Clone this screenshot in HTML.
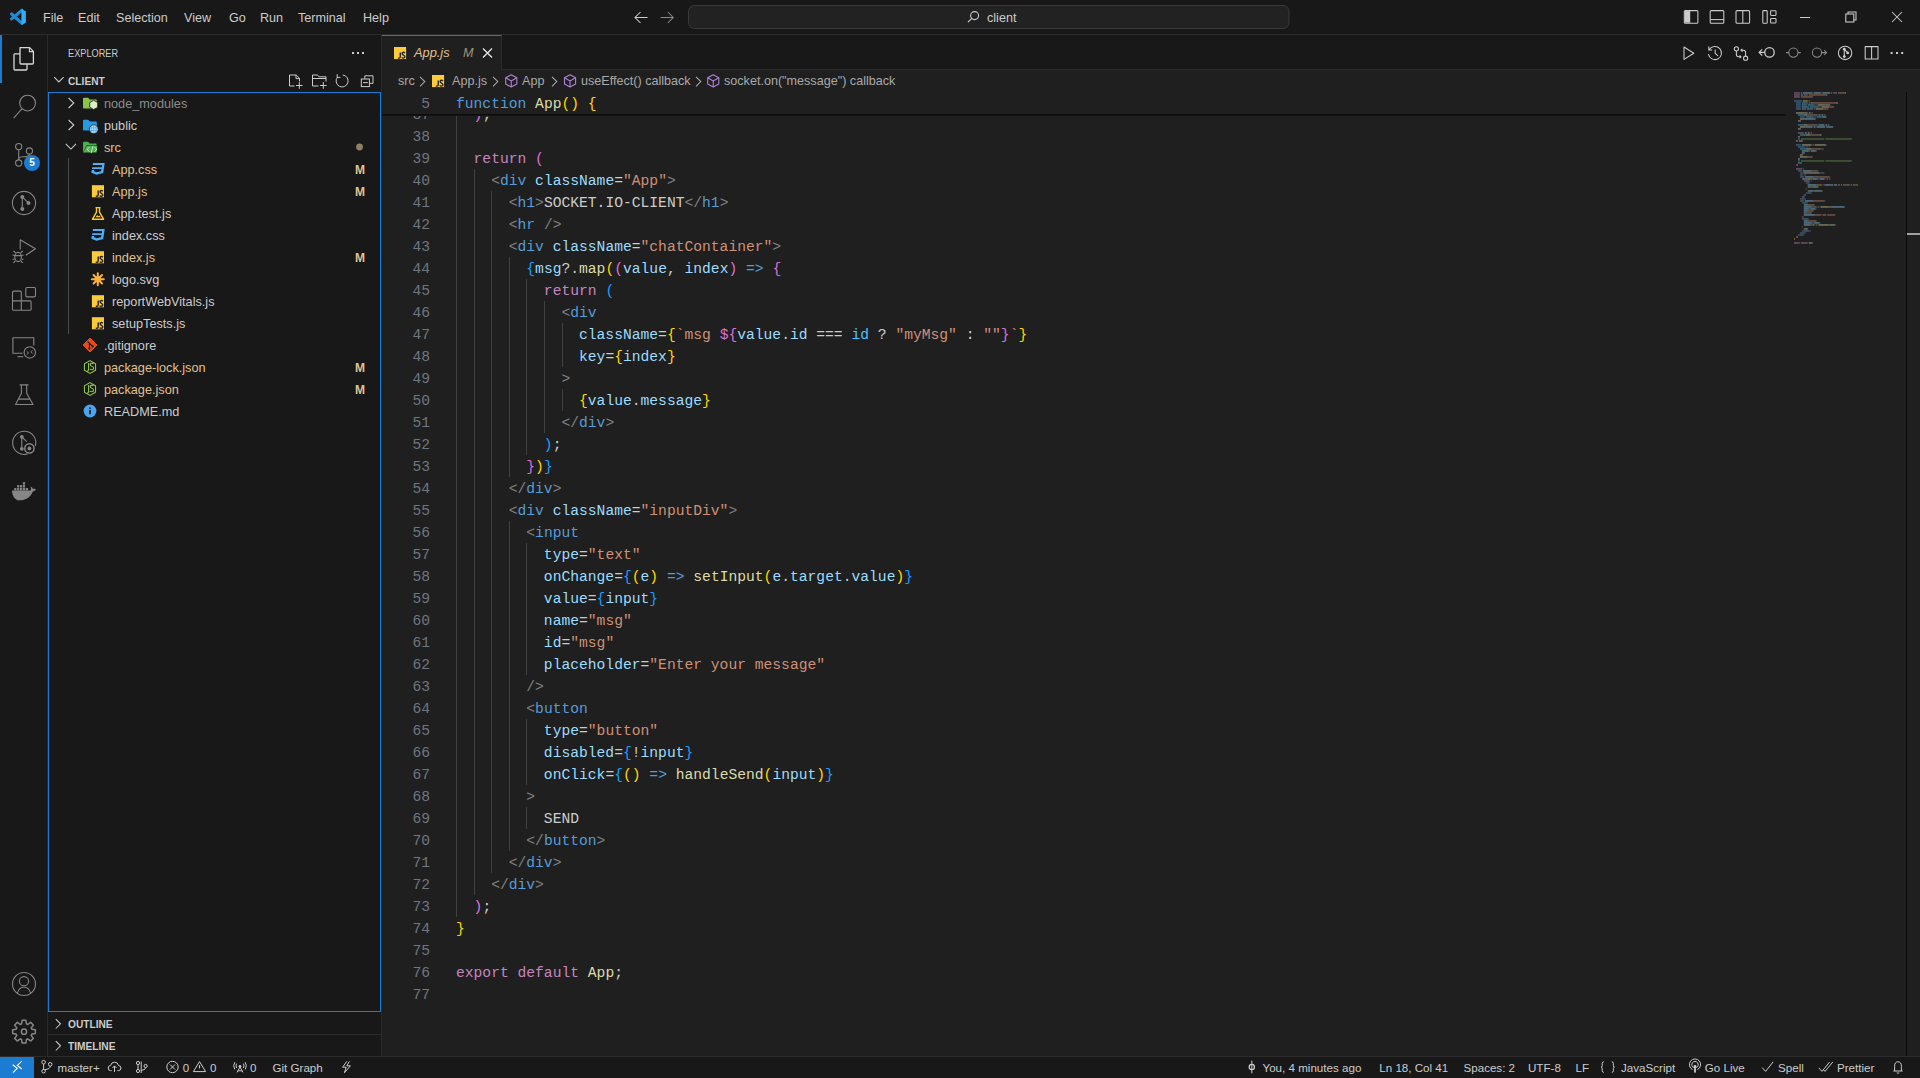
<!DOCTYPE html>
<html><head><meta charset="utf-8">
<style>
*{box-sizing:border-box}
html,body{margin:0;padding:0}
body{width:1920px;height:1078px;background:#181818;position:relative;overflow:hidden;font-family:"Liberation Sans",sans-serif;color:#CCCCCC;font-size:13px}
.a{position:absolute}
.t{position:absolute;white-space:nowrap;line-height:1}
svg{position:absolute;overflow:visible}
/* title bar */
#title{left:0;top:0;width:1920px;height:35px;background:#181818;border-bottom:1px solid #2B2B2B}
.menu{top:12px;font-size:12.6px;color:#CCCCCC}
/* activity */
#act{left:0;top:35px;width:48px;height:1021px;background:#181818;border-right:1px solid #2B2B2B}
/* sidebar */
#side{left:48px;top:35px;width:334px;height:1021px;background:#181818;border-right:1px solid #2B2B2B}
.row{position:absolute;height:22px;line-height:22px;white-space:nowrap;font-size:13px}
/* editor */
#editor{left:382px;top:35px;width:1538px;height:1021px;background:#1F1F1F;overflow:hidden}
.ln{position:absolute;left:0;width:48px;text-align:right;height:22px;line-height:22px;font-family:"Liberation Mono",monospace;font-size:14.65px;color:#6E7681}
.cl{position:absolute;left:74px;height:22px;line-height:22px;white-space:pre;font-family:"Liberation Mono",monospace;font-size:14.65px;color:#CCCCCC}
.ig{position:absolute;width:1px;height:22px;background:#404040}
#status{left:0;top:1056px;width:1920px;height:22px;background:#181818;border-top:1px solid #2B2B2B}
.sb{position:absolute;top:5px;font-size:12px;color:#CCCCCC;white-space:nowrap;line-height:1}
</style></head>
<body>
<!-- TITLE BAR -->
<div id="title" class="a">
  <svg style="left:0;top:0" width="40" height="35" viewBox="0 0 40 35">
    <path d="M22 10.2 L11.6 18.9 M11.6 14 L22 23.4" stroke="#1E8AD6" stroke-width="3.1" stroke-linecap="round"/>
    <path d="M21.4 9.3 L25.9 11.3 V22.7 L21.4 24.7 Z" fill="#38ABF2"/>
  </svg>
  <div class="t menu" style="left:43px">File</div>
  <div class="t menu" style="left:78px">Edit</div>
  <div class="t menu" style="left:116px">Selection</div>
  <div class="t menu" style="left:184px">View</div>
  <div class="t menu" style="left:229px">Go</div>
  <div class="t menu" style="left:260px">Run</div>
  <div class="t menu" style="left:298px">Terminal</div>
  <div class="t menu" style="left:363px">Help</div>
</div>

<!-- ACTIVITY BAR -->
<div id="act" class="a"></div>
<svg style="left:0;top:0" width="48" height="1078" viewBox="0 0 48 1078" fill="none" stroke="#868686" stroke-width="1.1" stroke-linejoin="round">
  <rect x="0" y="35" width="2" height="48" fill="#1B7CD2" stroke="none"/>
  <g stroke="#D7D7D7" stroke-width="1.3">
    <path d="M20 47.6 H29.6 L33.4 51.4 V63 Q33.4 64 32.4 64 H21 Q20 64 20 63 V48.6 Q20 47.6 21 47.6 Z"/>
    <path d="M29.4 47.8 V51.6 H33.2" stroke-width="1.1"/>
    <path d="M20 53.8 H15 Q14 53.8 14 54.8 V69 Q14 70 15 70 H26 Q27 70 27 69 V64.2"/>
  </g>
  <circle cx="27.6" cy="103.1" r="7.9"/><path d="M21.9 108.8 L13.6 118.2"/>
  <circle cx="18.7" cy="146.6" r="3.1"/><circle cx="29.4" cy="151" r="3.1"/><circle cx="18.7" cy="163" r="3.1"/>
  <path d="M18.7 149.7 V159.9 M18.7 158.5 Q19.5 156.8 23 156.8 H25 Q29.4 156.8 29.4 154.1"/>
  <circle cx="24" cy="203" r="11.6"/>
  <path d="M22.3 196.9 V208.9 M22.3 196.9 L28.5 203.1"/>
  <g fill="#868686" stroke="none"><circle cx="22.3" cy="196.9" r="2"/><circle cx="22.3" cy="208.9" r="2"/><circle cx="28.5" cy="203.1" r="2"/></g>
  <path d="M20.2 249.5 V239.8 L35.4 248.8 L25.8 255.2"/>
  <ellipse cx="18.1" cy="257" rx="3.3" ry="4.6"/>
  <path d="M14.8 255.3 H12.6 M14.8 259.2 H12.6 M21.4 255.3 H23.6 M21.4 259.2 H23.6 M15.6 252.8 L13.4 251 M20.6 252.8 L22.8 251 M15.3 261 L13.4 262.8 M20.9 261 L22.8 262.8 M14.8 255.6 H21.4"/>
  <rect x="25.8" y="287.5" width="9.7" height="9.4" rx="1.3"/>
  <path d="M13.8 291.1 H20.2 Q21.3 291.1 21.3 292.2 V300.9 H30 Q31.1 300.9 31.1 302 V309.2 Q31.1 310.3 30 310.3 H13.6 Q12.5 310.3 12.5 309.2 V292.4 Q12.5 291.1 13.8 291.1 Z M12.5 300.9 H21.3 M21.3 300.9 V310.3"/>
  <path d="M22.5 353.3 H12.9 V337.7 H33.8 V345.5"/><path d="M17.4 356.7 H23.2"/>
  <circle cx="29.8" cy="352.4" r="5.7"/>
  <path d="M26.8 351.4 L28.6 353 L26.8 354.6 M32.6 350.2 L30.8 351.8 L32.6 353.4" stroke-width="1"/>
  <path d="M19.6 384.9 H28.5 M21.4 384.9 V393.3 L15.6 404.5 H33 L26.7 393.3 V384.9 M18.4 399.1 H30.2"/>
  <path d="M27.5 454 A11.6 11.6 0 1 1 35.4 446"/>
  <path d="M21.8 436.8 V448.8 M21.8 436.8 L26.7 441.7"/>
  <g fill="#868686" stroke="none"><circle cx="21.8" cy="436.8" r="1.9"/><circle cx="21.8" cy="448.8" r="1.9"/></g>
  <circle cx="29.4" cy="448.4" r="4.6" stroke-width="1.5"/><circle cx="29.4" cy="448.4" r="1.9" fill="#868686" stroke="none"/>
  <g fill="#868686" stroke="none">
    <path d="M12 490.4 H30.6 C31.2 489.2 31 487.5 30.6 486.5 C31.8 487 32.6 488 32.9 489.1 C34 488.6 35.2 488.8 35.8 489.2 C35.3 490.5 34.2 491.3 32.8 491.4 C30.8 497 26 500.3 19.5 500.3 C14.5 500.3 12.2 495.5 12 490.4 Z"/>
    <rect x="14.2" y="488" width="2.2" height="2.4"/><rect x="17.1" y="488" width="2.2" height="2.4"/><rect x="20" y="488" width="2.2" height="2.4"/><rect x="22.9" y="488" width="2.2" height="2.4"/><rect x="25.8" y="488" width="2.2" height="2.4"/>
    <rect x="17.1" y="485.1" width="2.2" height="2.4"/><rect x="20" y="485.1" width="2.2" height="2.4"/><rect x="22.9" y="485.1" width="2.2" height="2.4"/>
    <rect x="22.9" y="482.2" width="2.2" height="2.4"/>
  </g>
  <circle cx="24" cy="984" r="11.5"/><circle cx="24" cy="981.2" r="4.6"/>
  <path d="M17.2 993.6 Q19 987 24 987 Q29 987 30.8 993.6"/>
  <path d="M31.84 1029.29 L35.34 1029.81 L35.34 1033.59 L31.84 1034.11 L31.25 1035.54 L33.36 1038.39 L30.69 1041.06 L27.84 1038.95 L26.41 1039.54 L25.89 1043.04 L22.11 1043.04 L21.59 1039.54 L20.16 1038.95 L17.31 1041.06 L14.64 1038.39 L16.75 1035.54 L16.16 1034.11 L12.66 1033.59 L12.66 1029.81 L16.16 1029.29 L16.75 1027.86 L14.64 1025.01 L17.31 1022.34 L20.16 1024.45 L21.59 1023.86 L22.11 1020.36 L25.89 1020.36 L26.41 1023.86 L27.84 1024.45 L30.69 1022.34 L33.36 1025.01 L31.25 1027.86 Z" stroke-width="1.5"/>
  <circle cx="24" cy="1031.7" r="2.6" stroke-width="1.5"/>
</svg>
<div class="a" style="left:24px;top:155px;width:16px;height:16px;border-radius:8px;background:#1B7CD2;color:#fff;font-size:10px;font-weight:bold;text-align:center;line-height:16px">5</div>

<!-- SIDEBAR -->
<div id="side" class="a"></div>
<svg style="left:0;top:0" width="1920" height="1078" viewBox="0 0 1920 1078">
<path d="M68.6 98 L73.8 103 L68.6 108" fill="none" stroke="#CCCCCC" stroke-width="1.05"/>
<path d="M83 98.8 Q83 97.8 84 97.8 H88.2 L89.6 99.39999999999999 H95.8 Q96.8 99.39999999999999 96.8 100.39999999999999 V107.39999999999999 Q96.8 108.39999999999999 95.8 108.39999999999999 H84 Q83 108.39999999999999 83 107.39999999999999 Z" fill="#8BC34A"/><polygon points="97.68,107.20 93.70,109.50 89.72,107.20 89.72,102.60 93.70,100.30 97.68,102.60" fill="#DCEDC8" stroke="#181818" stroke-width="0.8"/>
<path d="M68.6 120 L73.8 125 L68.6 130" fill="none" stroke="#CCCCCC" stroke-width="1.05"/>
<path d="M83 120.8 Q83 119.8 84 119.8 H88.2 L89.6 121.39999999999999 H95.8 Q96.8 121.39999999999999 96.8 122.39999999999999 V129.4 Q96.8 130.4 95.8 130.4 H84 Q83 130.4 83 129.4 Z" fill="#249BE0"/><circle cx="93.7" cy="129.2" r="4.4" fill="#BBDEFB" stroke="#181818" stroke-width="0.8"/>
<path d="M89.7 127.89999999999999 H97.7 M89.7 130.5 H97.7 M93.7 124.99999999999999 V133.39999999999998 M91.7 125.39999999999999 Q90.7 129.2 91.7 133.0 M95.7 125.39999999999999 Q96.7 129.2 95.7 133.0" stroke="#42A5F5" stroke-width="0.7" fill="none"/>
<path d="M65.8 143.8 L70.9 149 L76 143.8" fill="none" stroke="#CCCCCC" stroke-width="1.05"/>
<path d="M83 142.8 Q83 141.8 84 141.8 H88.2 L89.6 143.4 H95.6 Q96.6 143.4 96.6 144.4 V145.60000000000002 H86.4 L83 152.20000000000002 Z" fill="#4CAF50"/>
<path d="M86.6 146.10000000000002 H97.2 L96.6 152.4 H83 Z" fill="#4CAF50"/>
<path d="M89.6 147.20000000000002 L87 149.4 L89.6 151.6 M94.4 147.20000000000002 L97 149.4 L94.4 151.6 M93 146.0 L91 153.20000000000002" stroke="#C8E6C9" stroke-width="1" fill="none"/>
<circle cx="359.5" cy="147" r="3.4" fill="#8F7F66"/>
<path d="M93.00 163.00 L104.70 163.00 L103.20 173.00 L96.60 174.70 L91.30 172.70 L91.80 170.00 L94.00 170.00 L94.10 171.30 L96.70 172.30 L101.00 171.20 L101.40 169.00 L92.00 169.00 L92.30 167.20 L101.90 167.20 L102.20 165.00 L92.70 165.00 Z" fill="#4EAEF8"/>
<rect x="91.9" y="185.2" width="12.1" height="12.1" fill="#FCC93F"/>
<path d="M98.2 190.6 V195.0 Q98.2 196.29999999999998 96.9 196.29999999999998 H95.80000000000001 M102.80000000000001 191.29999999999998 Q102.2 190.5 101.30000000000001 190.5 Q100.10000000000001 190.5 100.10000000000001 191.79999999999998 Q100.10000000000001 192.79999999999998 101.30000000000001 193.29999999999998 Q102.80000000000001 193.89999999999998 102.80000000000001 195.0 Q102.80000000000001 196.29999999999998 101.2 196.29999999999998 Q100.2 196.29999999999998 99.7 195.6" fill="none" stroke="#262626" stroke-width="1.45"/>
<path d="M95.5 207.6 H100.5 M96.5 207.6 V212.1 L92.5 219.2 H103.5 L99.5 212.1 V207.6" fill="none" stroke="#FFCA28" stroke-width="1.4" stroke-linejoin="round"/>
<path d="M95.5 217.2 L97.3 215.0 L98.5 216.2 L99.3 215.4 L100.9 217.2 Z" fill="#FFCA28"/>
<path d="M93.00 229.00 L104.70 229.00 L103.20 239.00 L96.60 240.70 L91.30 238.70 L91.80 236.00 L94.00 236.00 L94.10 237.30 L96.70 238.30 L101.00 237.20 L101.40 235.00 L92.00 235.00 L92.30 233.20 L101.90 233.20 L102.20 231.00 L92.70 231.00 Z" fill="#4EAEF8"/>
<rect x="91.9" y="251.2" width="12.1" height="12.1" fill="#FCC93F"/>
<path d="M98.2 256.59999999999997 V261.0 Q98.2 262.3 96.9 262.3 H95.80000000000001 M102.80000000000001 257.3 Q102.2 256.5 101.30000000000001 256.5 Q100.10000000000001 256.5 100.10000000000001 257.8 Q100.10000000000001 258.8 101.30000000000001 259.3 Q102.80000000000001 259.9 102.80000000000001 261.0 Q102.80000000000001 262.3 101.2 262.3 Q100.2 262.3 99.7 261.59999999999997" fill="none" stroke="#262626" stroke-width="1.45"/>
<path d="M97.80 279.30 L103.80 279.30" stroke="#FDB03A" stroke-width="2" stroke-linecap="round"/>
<path d="M97.80 279.30 L102.04 283.54" stroke="#FDB03A" stroke-width="2" stroke-linecap="round"/>
<path d="M97.80 279.30 L97.80 285.30" stroke="#FDB03A" stroke-width="2" stroke-linecap="round"/>
<path d="M97.80 279.30 L93.56 283.54" stroke="#FDB03A" stroke-width="2" stroke-linecap="round"/>
<path d="M97.80 279.30 L91.80 279.30" stroke="#FDB03A" stroke-width="2" stroke-linecap="round"/>
<path d="M97.80 279.30 L93.56 275.06" stroke="#FDB03A" stroke-width="2" stroke-linecap="round"/>
<path d="M97.80 279.30 L97.80 273.30" stroke="#FDB03A" stroke-width="2" stroke-linecap="round"/>
<path d="M97.80 279.30 L102.04 275.06" stroke="#FDB03A" stroke-width="2" stroke-linecap="round"/>
<circle cx="97.8" cy="279.3" r="3.3" fill="#FDB03A"/>
<rect x="91.9" y="295.2" width="12.1" height="12.1" fill="#FCC93F"/>
<path d="M98.2 300.59999999999997 V305.0 Q98.2 306.3 96.9 306.3 H95.80000000000001 M102.80000000000001 301.3 Q102.2 300.5 101.30000000000001 300.5 Q100.10000000000001 300.5 100.10000000000001 301.8 Q100.10000000000001 302.8 101.30000000000001 303.3 Q102.80000000000001 303.9 102.80000000000001 305.0 Q102.80000000000001 306.3 101.2 306.3 Q100.2 306.3 99.7 305.59999999999997" fill="none" stroke="#262626" stroke-width="1.45"/>
<rect x="91.9" y="317.2" width="12.1" height="12.1" fill="#FCC93F"/>
<path d="M98.2 322.59999999999997 V327.0 Q98.2 328.3 96.9 328.3 H95.80000000000001 M102.80000000000001 323.3 Q102.2 322.5 101.30000000000001 322.5 Q100.10000000000001 322.5 100.10000000000001 323.8 Q100.10000000000001 324.8 101.30000000000001 325.3 Q102.80000000000001 325.9 102.80000000000001 327.0 Q102.80000000000001 328.3 101.2 328.3 Q100.2 328.3 99.7 327.59999999999997" fill="none" stroke="#262626" stroke-width="1.45"/>
<path d="M90 338 L97 345 L90 352 L83 345 Z" fill="#E64A19" stroke="#E64A19" stroke-width="1" stroke-linejoin="round"/>
<path d="M87.6 341.4 L92.6 346.4 M89.4 343.2 V348.6" stroke="#181818" stroke-width="1.1"/>
<circle cx="92.6" cy="346.4" r="1.1" fill="#181818"/><circle cx="89.4" cy="348.6" r="1.1" fill="#181818"/>
<polygon points="95.54,370.20 90.00,373.40 84.46,370.20 84.46,363.80 90.00,360.60 95.54,363.80" fill="none" stroke="#8BC34A" stroke-width="1.1"/>
<path d="M88.6 363.1 V369.6 Q88.6 371.3 87 371.3 M93.6 363.8 Q93 363.1 91.8 363.1 Q90.2 363.1 90.2 364.5 Q90.2 365.7 91.8 366.2 Q93.6 366.7 93.6 368.1 Q93.6 369.7 91.8 369.7 Q90.4 369.7 89.9 369" fill="none" stroke="#8BC34A" stroke-width="1.15"/>
<polygon points="95.54,392.20 90.00,395.40 84.46,392.20 84.46,385.80 90.00,382.60 95.54,385.80" fill="none" stroke="#8BC34A" stroke-width="1.1"/>
<path d="M88.6 385.1 V391.6 Q88.6 393.3 87 393.3 M93.6 385.8 Q93 385.1 91.8 385.1 Q90.2 385.1 90.2 386.5 Q90.2 387.7 91.8 388.2 Q93.6 388.7 93.6 390.1 Q93.6 391.7 91.8 391.7 Q90.4 391.7 89.9 391" fill="none" stroke="#8BC34A" stroke-width="1.15"/>
<circle cx="90" cy="411" r="6.4" fill="#4AA4EE"/>
<rect x="89.2" y="409.9" width="1.6" height="4.4" fill="#1E1E1E"/><rect x="89.2" y="407.4" width="1.6" height="1.6" fill="#1E1E1E"/>
<rect x="68" y="158" width="1" height="176" fill="#4A4A4A"/>
<rect x="48.5" y="92.5" width="332" height="919" fill="none" stroke="#1B7CD2" stroke-width="1"/>
<path d="M54.2 77.2 L58.9 81.9 L63.6 77.2" fill="none" stroke="#CCCCCC" stroke-width="1.05"/>
<path d="M55.8 1019.1 L60.5 1023.8 L55.8 1028.5" fill="none" stroke="#CCCCCC" stroke-width="1.05"/>
<path d="M55.8 1041.1 L60.5 1045.8 L55.8 1050.5" fill="none" stroke="#CCCCCC" stroke-width="1.05"/>
<rect x="48" y="1034" width="333" height="1" fill="#2B2B2B"/>
<g fill="#CCCCCC"><rect x="352" y="52" width="2" height="2"/><rect x="357" y="52" width="2" height="2"/><rect x="362" y="52" width="2" height="2"/></g>
<g fill="none" stroke="#CCCCCC" stroke-width="1">
<path d="M294.5 86 H289.5 V75 H296.2 L299.5 78.3 V81.5 M296 75 V78.6 H299.5"/>
<path d="M296 85.5 H302.6 M299.3 82.2 V88.8"/>
<path d="M318.5 86 H312.5 V75 H317.5 L319 76.8 H326 V81.5 M312.5 78.5 H326"/>
<path d="M320 85.5 H326.6 M323.3 82.2 V88.8"/>
<path d="M337.6 77 A6 6 0 1 0 342.8 75 M337.2 74.2 V77.4 H340.4"/>
<path d="M364.8 78.8 V75.8 H373 V83.3 H369.5"/>
<rect x="361.3" y="79" width="8.1" height="7.6"/>
<path d="M363 82.6 H367.8"/>
</g>
</svg>
<div class="t" style="left:104px;top:98px;font-size:12.7px;color:#8C8C8C">node_modules</div>
<div class="t" style="left:104px;top:120px;font-size:12.7px;color:#CCCCCC">public</div>
<div class="t" style="left:104px;top:142px;font-size:12.7px;color:#E2C08D">src</div>
<div class="t" style="left:112px;top:164px;font-size:12.7px;color:#E2C08D">App.css</div>
<div class="t" style="left:355px;top:164px;font-size:12px;font-weight:bold;color:#E2C08D">M</div>
<div class="t" style="left:112px;top:186px;font-size:12.7px;color:#E2C08D">App.js</div>
<div class="t" style="left:355px;top:186px;font-size:12px;font-weight:bold;color:#E2C08D">M</div>
<div class="t" style="left:112px;top:208px;font-size:12.7px;color:#CCCCCC">App.test.js</div>
<div class="t" style="left:112px;top:230px;font-size:12.7px;color:#CCCCCC">index.css</div>
<div class="t" style="left:112px;top:252px;font-size:12.7px;color:#E2C08D">index.js</div>
<div class="t" style="left:355px;top:252px;font-size:12px;font-weight:bold;color:#E2C08D">M</div>
<div class="t" style="left:112px;top:274px;font-size:12.7px;color:#CCCCCC">logo.svg</div>
<div class="t" style="left:112px;top:296px;font-size:12.7px;color:#CCCCCC">reportWebVitals.js</div>
<div class="t" style="left:112px;top:318px;font-size:12.7px;color:#CCCCCC">setupTests.js</div>
<div class="t" style="left:104px;top:340px;font-size:12.7px;color:#CCCCCC">.gitignore</div>
<div class="t" style="left:104px;top:362px;font-size:12.7px;color:#E2C08D">package-lock.json</div>
<div class="t" style="left:355px;top:362px;font-size:12px;font-weight:bold;color:#E2C08D">M</div>
<div class="t" style="left:104px;top:384px;font-size:12.7px;color:#E2C08D">package.json</div>
<div class="t" style="left:355px;top:384px;font-size:12px;font-weight:bold;color:#E2C08D">M</div>
<div class="t" style="left:104px;top:406px;font-size:12.7px;color:#CCCCCC">README.md</div>
<div class="t" style="left:68px;top:48px;font-size:11px;color:#CCCCCC;transform:scaleX(0.835);transform-origin:0 0">EXPLORER</div>
<div class="t" style="left:68px;top:76px;font-size:10.6px;font-weight:bold;color:#CCCCCC;transform:scaleX(0.96);transform-origin:0 0">CLIENT</div>
<div class="t" style="left:68px;top:1019px;font-size:10.6px;font-weight:bold;color:#CCCCCC;transform:scaleX(0.96);transform-origin:0 0">OUTLINE</div>
<div class="t" style="left:68px;top:1041px;font-size:10.6px;font-weight:bold;color:#CCCCCC;transform:scaleX(0.96);transform-origin:0 0">TIMELINE</div>
<!-- EDITOR -->
<div id="editor" class="a">
<div class="ig" style="left:74.0px;top:68px"></div>
<div class="ig" style="left:74.0px;top:90px"></div>
<div class="ig" style="left:74.0px;top:112px"></div>
<div class="ig" style="left:74.0px;top:134px"></div>
<div class="ig" style="left:91.6px;top:134px"></div>
<div class="ig" style="left:74.0px;top:156px"></div>
<div class="ig" style="left:91.6px;top:156px"></div>
<div class="ig" style="left:109.2px;top:156px"></div>
<div class="ig" style="left:74.0px;top:178px"></div>
<div class="ig" style="left:91.6px;top:178px"></div>
<div class="ig" style="left:109.2px;top:178px"></div>
<div class="ig" style="left:74.0px;top:200px"></div>
<div class="ig" style="left:91.6px;top:200px"></div>
<div class="ig" style="left:109.2px;top:200px"></div>
<div class="ig" style="left:74.0px;top:222px"></div>
<div class="ig" style="left:91.6px;top:222px"></div>
<div class="ig" style="left:109.2px;top:222px"></div>
<div class="ig" style="left:126.7px;top:222px"></div>
<div class="ig" style="left:74.0px;top:244px"></div>
<div class="ig" style="left:91.6px;top:244px"></div>
<div class="ig" style="left:109.2px;top:244px"></div>
<div class="ig" style="left:126.7px;top:244px"></div>
<div class="ig" style="left:144.3px;top:244px"></div>
<div class="ig" style="left:74.0px;top:266px"></div>
<div class="ig" style="left:91.6px;top:266px"></div>
<div class="ig" style="left:109.2px;top:266px"></div>
<div class="ig" style="left:126.7px;top:266px"></div>
<div class="ig" style="left:144.3px;top:266px"></div>
<div class="ig" style="left:161.9px;top:266px"></div>
<div class="ig" style="left:74.0px;top:288px"></div>
<div class="ig" style="left:91.6px;top:288px"></div>
<div class="ig" style="left:109.2px;top:288px"></div>
<div class="ig" style="left:126.7px;top:288px"></div>
<div class="ig" style="left:144.3px;top:288px"></div>
<div class="ig" style="left:161.9px;top:288px"></div>
<div class="ig" style="left:179.5px;top:288px"></div>
<div class="ig" style="left:74.0px;top:310px"></div>
<div class="ig" style="left:91.6px;top:310px"></div>
<div class="ig" style="left:109.2px;top:310px"></div>
<div class="ig" style="left:126.7px;top:310px"></div>
<div class="ig" style="left:144.3px;top:310px"></div>
<div class="ig" style="left:161.9px;top:310px"></div>
<div class="ig" style="left:179.5px;top:310px"></div>
<div class="ig" style="left:74.0px;top:332px"></div>
<div class="ig" style="left:91.6px;top:332px"></div>
<div class="ig" style="left:109.2px;top:332px"></div>
<div class="ig" style="left:126.7px;top:332px"></div>
<div class="ig" style="left:144.3px;top:332px"></div>
<div class="ig" style="left:161.9px;top:332px"></div>
<div class="ig" style="left:74.0px;top:354px"></div>
<div class="ig" style="left:91.6px;top:354px"></div>
<div class="ig" style="left:109.2px;top:354px"></div>
<div class="ig" style="left:126.7px;top:354px"></div>
<div class="ig" style="left:144.3px;top:354px"></div>
<div class="ig" style="left:161.9px;top:354px"></div>
<div class="ig" style="left:179.5px;top:354px"></div>
<div class="ig" style="left:74.0px;top:376px"></div>
<div class="ig" style="left:91.6px;top:376px"></div>
<div class="ig" style="left:109.2px;top:376px"></div>
<div class="ig" style="left:126.7px;top:376px"></div>
<div class="ig" style="left:144.3px;top:376px"></div>
<div class="ig" style="left:161.9px;top:376px"></div>
<div class="ig" style="left:74.0px;top:398px"></div>
<div class="ig" style="left:91.6px;top:398px"></div>
<div class="ig" style="left:109.2px;top:398px"></div>
<div class="ig" style="left:126.7px;top:398px"></div>
<div class="ig" style="left:144.3px;top:398px"></div>
<div class="ig" style="left:74.0px;top:420px"></div>
<div class="ig" style="left:91.6px;top:420px"></div>
<div class="ig" style="left:109.2px;top:420px"></div>
<div class="ig" style="left:126.7px;top:420px"></div>
<div class="ig" style="left:74.0px;top:442px"></div>
<div class="ig" style="left:91.6px;top:442px"></div>
<div class="ig" style="left:109.2px;top:442px"></div>
<div class="ig" style="left:74.0px;top:464px"></div>
<div class="ig" style="left:91.6px;top:464px"></div>
<div class="ig" style="left:109.2px;top:464px"></div>
<div class="ig" style="left:74.0px;top:486px"></div>
<div class="ig" style="left:91.6px;top:486px"></div>
<div class="ig" style="left:109.2px;top:486px"></div>
<div class="ig" style="left:126.7px;top:486px"></div>
<div class="ig" style="left:74.0px;top:508px"></div>
<div class="ig" style="left:91.6px;top:508px"></div>
<div class="ig" style="left:109.2px;top:508px"></div>
<div class="ig" style="left:126.7px;top:508px"></div>
<div class="ig" style="left:144.3px;top:508px"></div>
<div class="ig" style="left:74.0px;top:530px"></div>
<div class="ig" style="left:91.6px;top:530px"></div>
<div class="ig" style="left:109.2px;top:530px"></div>
<div class="ig" style="left:126.7px;top:530px"></div>
<div class="ig" style="left:144.3px;top:530px"></div>
<div class="ig" style="left:74.0px;top:552px"></div>
<div class="ig" style="left:91.6px;top:552px"></div>
<div class="ig" style="left:109.2px;top:552px"></div>
<div class="ig" style="left:126.7px;top:552px"></div>
<div class="ig" style="left:144.3px;top:552px"></div>
<div class="ig" style="left:74.0px;top:574px"></div>
<div class="ig" style="left:91.6px;top:574px"></div>
<div class="ig" style="left:109.2px;top:574px"></div>
<div class="ig" style="left:126.7px;top:574px"></div>
<div class="ig" style="left:144.3px;top:574px"></div>
<div class="ig" style="left:74.0px;top:596px"></div>
<div class="ig" style="left:91.6px;top:596px"></div>
<div class="ig" style="left:109.2px;top:596px"></div>
<div class="ig" style="left:126.7px;top:596px"></div>
<div class="ig" style="left:144.3px;top:596px"></div>
<div class="ig" style="left:74.0px;top:618px"></div>
<div class="ig" style="left:91.6px;top:618px"></div>
<div class="ig" style="left:109.2px;top:618px"></div>
<div class="ig" style="left:126.7px;top:618px"></div>
<div class="ig" style="left:144.3px;top:618px"></div>
<div class="ig" style="left:74.0px;top:640px"></div>
<div class="ig" style="left:91.6px;top:640px"></div>
<div class="ig" style="left:109.2px;top:640px"></div>
<div class="ig" style="left:126.7px;top:640px"></div>
<div class="ig" style="left:74.0px;top:662px"></div>
<div class="ig" style="left:91.6px;top:662px"></div>
<div class="ig" style="left:109.2px;top:662px"></div>
<div class="ig" style="left:126.7px;top:662px"></div>
<div class="ig" style="left:74.0px;top:684px"></div>
<div class="ig" style="left:91.6px;top:684px"></div>
<div class="ig" style="left:109.2px;top:684px"></div>
<div class="ig" style="left:126.7px;top:684px"></div>
<div class="ig" style="left:144.3px;top:684px"></div>
<div class="ig" style="left:74.0px;top:706px"></div>
<div class="ig" style="left:91.6px;top:706px"></div>
<div class="ig" style="left:109.2px;top:706px"></div>
<div class="ig" style="left:126.7px;top:706px"></div>
<div class="ig" style="left:144.3px;top:706px"></div>
<div class="ig" style="left:74.0px;top:728px"></div>
<div class="ig" style="left:91.6px;top:728px"></div>
<div class="ig" style="left:109.2px;top:728px"></div>
<div class="ig" style="left:126.7px;top:728px"></div>
<div class="ig" style="left:144.3px;top:728px"></div>
<div class="ig" style="left:74.0px;top:750px"></div>
<div class="ig" style="left:91.6px;top:750px"></div>
<div class="ig" style="left:109.2px;top:750px"></div>
<div class="ig" style="left:126.7px;top:750px"></div>
<div class="ig" style="left:74.0px;top:772px"></div>
<div class="ig" style="left:91.6px;top:772px"></div>
<div class="ig" style="left:109.2px;top:772px"></div>
<div class="ig" style="left:126.7px;top:772px"></div>
<div class="ig" style="left:144.3px;top:772px"></div>
<div class="ig" style="left:74.0px;top:794px"></div>
<div class="ig" style="left:91.6px;top:794px"></div>
<div class="ig" style="left:109.2px;top:794px"></div>
<div class="ig" style="left:126.7px;top:794px"></div>
<div class="ig" style="left:74.0px;top:816px"></div>
<div class="ig" style="left:91.6px;top:816px"></div>
<div class="ig" style="left:109.2px;top:816px"></div>
<div class="ig" style="left:74.0px;top:838px"></div>
<div class="ig" style="left:91.6px;top:838px"></div>
<div class="ig" style="left:74.0px;top:860px"></div>
<div class="ln" style="top:69px">37</div>
<div class="cl" style="top:69px"><span style="color:#CCCCCC">  </span><span style="color:#DA70D6">)</span><span style="color:#CCCCCC">;</span></div>
<div class="ln" style="top:91px">38</div>
<div class="cl" style="top:91px"></div>
<div class="ln" style="top:113px">39</div>
<div class="cl" style="top:113px"><span style="color:#CCCCCC">  </span><span style="color:#C586C0">return</span><span style="color:#CCCCCC"> </span><span style="color:#DA70D6">(</span></div>
<div class="ln" style="top:135px">40</div>
<div class="cl" style="top:135px"><span style="color:#CCCCCC">    </span><span style="color:#808080">&lt;</span><span style="color:#569CD6">div</span><span style="color:#CCCCCC"> </span><span style="color:#9CDCFE">className</span><span style="color:#CCCCCC">=</span><span style="color:#CE9178">&quot;App&quot;</span><span style="color:#808080">&gt;</span></div>
<div class="ln" style="top:157px">41</div>
<div class="cl" style="top:157px"><span style="color:#CCCCCC">      </span><span style="color:#808080">&lt;</span><span style="color:#569CD6">h1</span><span style="color:#808080">&gt;</span><span style="color:#CCCCCC">SOCKET.IO-CLIENT</span><span style="color:#808080">&lt;/</span><span style="color:#569CD6">h1</span><span style="color:#808080">&gt;</span></div>
<div class="ln" style="top:179px">42</div>
<div class="cl" style="top:179px"><span style="color:#CCCCCC">      </span><span style="color:#808080">&lt;</span><span style="color:#569CD6">hr</span><span style="color:#CCCCCC"> </span><span style="color:#808080">/&gt;</span></div>
<div class="ln" style="top:201px">43</div>
<div class="cl" style="top:201px"><span style="color:#CCCCCC">      </span><span style="color:#808080">&lt;</span><span style="color:#569CD6">div</span><span style="color:#CCCCCC"> </span><span style="color:#9CDCFE">className</span><span style="color:#CCCCCC">=</span><span style="color:#CE9178">&quot;chatContainer&quot;</span><span style="color:#808080">&gt;</span></div>
<div class="ln" style="top:223px">44</div>
<div class="cl" style="top:223px"><span style="color:#CCCCCC">        </span><span style="color:#179FFF">{</span><span style="color:#9CDCFE">msg</span><span style="color:#CCCCCC">?.</span><span style="color:#DCDCAA">map</span><span style="color:#FFD700">(</span><span style="color:#DA70D6">(</span><span style="color:#9CDCFE">value</span><span style="color:#CCCCCC">, </span><span style="color:#9CDCFE">index</span><span style="color:#DA70D6">)</span><span style="color:#CCCCCC"> </span><span style="color:#569CD6">=&gt;</span><span style="color:#CCCCCC"> </span><span style="color:#DA70D6">{</span></div>
<div class="ln" style="top:245px">45</div>
<div class="cl" style="top:245px"><span style="color:#CCCCCC">          </span><span style="color:#C586C0">return</span><span style="color:#CCCCCC"> </span><span style="color:#179FFF">(</span></div>
<div class="ln" style="top:267px">46</div>
<div class="cl" style="top:267px"><span style="color:#CCCCCC">            </span><span style="color:#808080">&lt;</span><span style="color:#569CD6">div</span></div>
<div class="ln" style="top:289px">47</div>
<div class="cl" style="top:289px"><span style="color:#CCCCCC">              </span><span style="color:#9CDCFE">className</span><span style="color:#CCCCCC">=</span><span style="color:#FFD700">{</span><span style="color:#CE9178">`msg </span><span style="color:#DA70D6">${</span><span style="color:#9CDCFE">value</span><span style="color:#CCCCCC">.</span><span style="color:#9CDCFE">id</span><span style="color:#CCCCCC"> === </span><span style="color:#4FC1FF">id</span><span style="color:#CCCCCC"> ? </span><span style="color:#CE9178">&quot;myMsg&quot;</span><span style="color:#CCCCCC"> : </span><span style="color:#CE9178">&quot;&quot;</span><span style="color:#DA70D6">}</span><span style="color:#CE9178">`</span><span style="color:#FFD700">}</span></div>
<div class="ln" style="top:311px">48</div>
<div class="cl" style="top:311px"><span style="color:#CCCCCC">              </span><span style="color:#9CDCFE">key</span><span style="color:#CCCCCC">=</span><span style="color:#FFD700">{</span><span style="color:#9CDCFE">index</span><span style="color:#FFD700">}</span></div>
<div class="ln" style="top:333px">49</div>
<div class="cl" style="top:333px"><span style="color:#CCCCCC">            </span><span style="color:#808080">&gt;</span></div>
<div class="ln" style="top:355px">50</div>
<div class="cl" style="top:355px"><span style="color:#CCCCCC">              </span><span style="color:#FFD700">{</span><span style="color:#9CDCFE">value</span><span style="color:#CCCCCC">.</span><span style="color:#9CDCFE">message</span><span style="color:#FFD700">}</span></div>
<div class="ln" style="top:377px">51</div>
<div class="cl" style="top:377px"><span style="color:#CCCCCC">            </span><span style="color:#808080">&lt;/</span><span style="color:#569CD6">div</span><span style="color:#808080">&gt;</span></div>
<div class="ln" style="top:399px">52</div>
<div class="cl" style="top:399px"><span style="color:#CCCCCC">          </span><span style="color:#179FFF">)</span><span style="color:#CCCCCC">;</span></div>
<div class="ln" style="top:421px">53</div>
<div class="cl" style="top:421px"><span style="color:#CCCCCC">        </span><span style="color:#DA70D6">}</span><span style="color:#FFD700">)</span><span style="color:#179FFF">}</span></div>
<div class="ln" style="top:443px">54</div>
<div class="cl" style="top:443px"><span style="color:#CCCCCC">      </span><span style="color:#808080">&lt;/</span><span style="color:#569CD6">div</span><span style="color:#808080">&gt;</span></div>
<div class="ln" style="top:465px">55</div>
<div class="cl" style="top:465px"><span style="color:#CCCCCC">      </span><span style="color:#808080">&lt;</span><span style="color:#569CD6">div</span><span style="color:#CCCCCC"> </span><span style="color:#9CDCFE">className</span><span style="color:#CCCCCC">=</span><span style="color:#CE9178">&quot;inputDiv&quot;</span><span style="color:#808080">&gt;</span></div>
<div class="ln" style="top:487px">56</div>
<div class="cl" style="top:487px"><span style="color:#CCCCCC">        </span><span style="color:#808080">&lt;</span><span style="color:#569CD6">input</span></div>
<div class="ln" style="top:509px">57</div>
<div class="cl" style="top:509px"><span style="color:#CCCCCC">          </span><span style="color:#9CDCFE">type</span><span style="color:#CCCCCC">=</span><span style="color:#CE9178">&quot;text&quot;</span></div>
<div class="ln" style="top:531px">58</div>
<div class="cl" style="top:531px"><span style="color:#CCCCCC">          </span><span style="color:#9CDCFE">onChange</span><span style="color:#CCCCCC">=</span><span style="color:#179FFF">{</span><span style="color:#FFD700">(</span><span style="color:#9CDCFE">e</span><span style="color:#FFD700">)</span><span style="color:#CCCCCC"> </span><span style="color:#569CD6">=&gt;</span><span style="color:#CCCCCC"> </span><span style="color:#DCDCAA">setInput</span><span style="color:#FFD700">(</span><span style="color:#9CDCFE">e</span><span style="color:#CCCCCC">.</span><span style="color:#9CDCFE">target</span><span style="color:#CCCCCC">.</span><span style="color:#9CDCFE">value</span><span style="color:#FFD700">)</span><span style="color:#179FFF">}</span></div>
<div class="ln" style="top:553px">59</div>
<div class="cl" style="top:553px"><span style="color:#CCCCCC">          </span><span style="color:#9CDCFE">value</span><span style="color:#CCCCCC">=</span><span style="color:#179FFF">{</span><span style="color:#9CDCFE">input</span><span style="color:#179FFF">}</span></div>
<div class="ln" style="top:575px">60</div>
<div class="cl" style="top:575px"><span style="color:#CCCCCC">          </span><span style="color:#9CDCFE">name</span><span style="color:#CCCCCC">=</span><span style="color:#CE9178">&quot;msg&quot;</span></div>
<div class="ln" style="top:597px">61</div>
<div class="cl" style="top:597px"><span style="color:#CCCCCC">          </span><span style="color:#9CDCFE">id</span><span style="color:#CCCCCC">=</span><span style="color:#CE9178">&quot;msg&quot;</span></div>
<div class="ln" style="top:619px">62</div>
<div class="cl" style="top:619px"><span style="color:#CCCCCC">          </span><span style="color:#9CDCFE">placeholder</span><span style="color:#CCCCCC">=</span><span style="color:#CE9178">&quot;Enter your message&quot;</span></div>
<div class="ln" style="top:641px">63</div>
<div class="cl" style="top:641px"><span style="color:#CCCCCC">        </span><span style="color:#808080">/&gt;</span></div>
<div class="ln" style="top:663px">64</div>
<div class="cl" style="top:663px"><span style="color:#CCCCCC">        </span><span style="color:#808080">&lt;</span><span style="color:#569CD6">button</span></div>
<div class="ln" style="top:685px">65</div>
<div class="cl" style="top:685px"><span style="color:#CCCCCC">          </span><span style="color:#9CDCFE">type</span><span style="color:#CCCCCC">=</span><span style="color:#CE9178">&quot;button&quot;</span></div>
<div class="ln" style="top:707px">66</div>
<div class="cl" style="top:707px"><span style="color:#CCCCCC">          </span><span style="color:#9CDCFE">disabled</span><span style="color:#CCCCCC">=</span><span style="color:#179FFF">{</span><span style="color:#CCCCCC">!</span><span style="color:#9CDCFE">input</span><span style="color:#179FFF">}</span></div>
<div class="ln" style="top:729px">67</div>
<div class="cl" style="top:729px"><span style="color:#CCCCCC">          </span><span style="color:#9CDCFE">onClick</span><span style="color:#CCCCCC">=</span><span style="color:#179FFF">{</span><span style="color:#FFD700">()</span><span style="color:#CCCCCC"> </span><span style="color:#569CD6">=&gt;</span><span style="color:#CCCCCC"> </span><span style="color:#DCDCAA">handleSend</span><span style="color:#FFD700">(</span><span style="color:#9CDCFE">input</span><span style="color:#FFD700">)</span><span style="color:#179FFF">}</span></div>
<div class="ln" style="top:751px">68</div>
<div class="cl" style="top:751px"><span style="color:#CCCCCC">        </span><span style="color:#808080">&gt;</span></div>
<div class="ln" style="top:773px">69</div>
<div class="cl" style="top:773px"><span style="color:#CCCCCC">          </span><span style="color:#CCCCCC">SEND</span></div>
<div class="ln" style="top:795px">70</div>
<div class="cl" style="top:795px"><span style="color:#CCCCCC">        </span><span style="color:#808080">&lt;/</span><span style="color:#569CD6">button</span><span style="color:#808080">&gt;</span></div>
<div class="ln" style="top:817px">71</div>
<div class="cl" style="top:817px"><span style="color:#CCCCCC">      </span><span style="color:#808080">&lt;/</span><span style="color:#569CD6">div</span><span style="color:#808080">&gt;</span></div>
<div class="ln" style="top:839px">72</div>
<div class="cl" style="top:839px"><span style="color:#CCCCCC">    </span><span style="color:#808080">&lt;/</span><span style="color:#569CD6">div</span><span style="color:#808080">&gt;</span></div>
<div class="ln" style="top:861px">73</div>
<div class="cl" style="top:861px"><span style="color:#CCCCCC">  </span><span style="color:#DA70D6">)</span><span style="color:#CCCCCC">;</span></div>
<div class="ln" style="top:883px">74</div>
<div class="cl" style="top:883px"><span style="color:#FFD700">}</span></div>
<div class="ln" style="top:905px">75</div>
<div class="cl" style="top:905px"></div>
<div class="ln" style="top:927px">76</div>
<div class="cl" style="top:927px"><span style="color:#C586C0">export</span><span style="color:#CCCCCC"> </span><span style="color:#C586C0">default</span><span style="color:#CCCCCC"> </span><span style="color:#DCDCAA">App</span><span style="color:#CCCCCC">;</span></div>
<div class="ln" style="top:949px">77</div>
<div class="cl" style="top:949px"></div>
</div>

<div class="a" style="left:382px;top:35px;width:1538px;height:35px;background:#181818;border-bottom:1px solid #2B2B2B"></div>
<div class="a" style="left:382px;top:35px;width:120px;height:35px;background:#1F1F1F;border-top:1px solid #1B7CD2;border-right:1px solid #2B2B2B"></div>
<div class="t" style="left:414px;top:47px;font-size:12.8px;font-style:italic;color:#E2C08D">App.js</div>
<div class="t" style="left:463px;top:47px;font-size:12.6px;font-style:italic;color:#A1927A">M</div>
<div class="t" style="left:398px;top:75px;font-size:12.6px;color:#A9A9A9">src</div>
<div class="t" style="left:452px;top:75px;font-size:12.6px;color:#A9A9A9">App.js</div>
<div class="t" style="left:522px;top:75px;font-size:12.6px;color:#A9A9A9">App</div>
<div class="t" style="left:581px;top:75px;font-size:12.6px;color:#A9A9A9">useEffect() callback</div>
<div class="t" style="left:724px;top:75px;font-size:12.6px;color:#A9A9A9">socket.on("message") callback</div>
<div class="a" style="left:382px;top:92px;width:1404px;height:22px;background:#1F1F1F"></div>
<div class="a" style="left:382px;top:114px;width:1404px;height:2px;background:linear-gradient(#080808,#101010 60%,#1a1a1a)"></div>
<div class="ln" style="left:382px;top:93px;color:#6E7681">5</div>
<div class="cl" style="left:456px;top:93px"><span style="color:#569CD6">function</span><span style="color:#CCCCCC"> </span><span style="color:#DCDCAA">App</span><span style="color:#FFD700">()</span><span style="color:#CCCCCC"> </span><span style="color:#FFD700">{</span></div>
<div class="a" style="left:1906px;top:92px;width:1px;height:964px;background:#0A0A0A"></div>
<div class="a" style="left:1907px;top:233px;width:13px;height:2px;background:#A0A0A0"></div>
<svg style="left:0;top:0" width="1920" height="1078" viewBox="0 0 1920 1078">
<rect x="394" y="47" width="12.1" height="12.1" fill="#FCC93F"/>
<path d="M400.3 52.4 V56.8 Q400.3 58.1 399 58.1 H397.9 M404.9 53.1 Q404.3 52.3 403.4 52.3 Q402.2 52.3 402.2 53.6 Q402.2 54.6 403.4 55.1 Q404.9 55.7 404.9 56.8 Q404.9 58.1 403.3 58.1 Q402.3 58.1 401.8 57.4" fill="none" stroke="#262626" stroke-width="1.45"/>
<path d="M483 48.5 L492 57.5 M492 48.5 L483 57.5" stroke="#E8E8E8" stroke-width="1.25"/>
<path d="M420 76.8 L424.8 81.6 L420 86.4" fill="none" stroke="#A9A9A9" stroke-width="1.05"/>
<path d="M493 76.8 L497.8 81.6 L493 86.4" fill="none" stroke="#A9A9A9" stroke-width="1.05"/>
<path d="M552 76.8 L556.8 81.6 L552 86.4" fill="none" stroke="#A9A9A9" stroke-width="1.05"/>
<path d="M696 76.8 L700.8 81.6 L696 86.4" fill="none" stroke="#A9A9A9" stroke-width="1.05"/>
<rect x="432" y="75" width="12.1" height="12.1" fill="#FCC93F"/>
<path d="M438.3 80.4 V84.8 Q438.3 86.1 437 86.1 H435.9 M442.9 81.1 Q442.3 80.3 441.4 80.3 Q440.2 80.3 440.2 81.6 Q440.2 82.6 441.4 83.1 Q442.9 83.7 442.9 84.8 Q442.9 86.1 441.3 86.1 Q440.3 86.1 439.8 85.4" fill="none" stroke="#262626" stroke-width="1.45"/>
<g fill="none" stroke="#B180D7" stroke-width="1.1" stroke-linejoin="round">
<path d="M511.25 74.8 L516.8 77.8 V84 L511.25 87 L505.7 84 V77.8 Z"/>
<path d="M505.7 77.8 L511.25 80.9 L516.8 77.8 M511.25 80.9 V87"/></g>
<g fill="none" stroke="#B180D7" stroke-width="1.1" stroke-linejoin="round">
<path d="M570.05 74.8 L575.5999999999999 77.8 V84 L570.05 87 L564.5 84 V77.8 Z"/>
<path d="M564.5 77.8 L570.05 80.9 L575.5999999999999 77.8 M570.05 80.9 V87"/></g>
<g fill="none" stroke="#B180D7" stroke-width="1.1" stroke-linejoin="round">
<path d="M713.25 74.8 L718.8 77.8 V84 L713.25 87 L707.7 84 V77.8 Z"/>
<path d="M707.7 77.8 L713.25 80.9 L718.8 77.8 M713.25 80.9 V87"/></g>
<g fill="none" stroke="#CCCCCC" stroke-width="1.05" stroke-linejoin="round">
<path d="M1684 47 L1693.8 53.2 L1684 59.4 Z"/>
<path d="M1709.3 49.5 A6.6 6.6 0 1 1 1708.4 54.2 M1708.8 46.6 V50 H1712.2 M1715.2 49.6 V53.4 L1718 55.8"/>
<circle cx="1736.4" cy="48.8" r="2.1"/><circle cx="1745.6" cy="58.2" r="2.1"/>
<path d="M1736.4 51 V54.6 Q1736.4 56.8 1738.6 56.8 H1741 M1739.6 55.4 L1741.1 56.8 L1739.6 58.2 M1745.6 56 V52.4 Q1745.6 50.2 1743.4 50.2 H1741 M1742.4 48.8 L1740.9 50.2 L1742.4 51.6"/>
<circle cx="1769.5" cy="52.4" r="4.7" stroke-width="1.3"/><path d="M1764.8 52.4 H1759 M1762.2 49.3 L1759 52.4 L1762.2 55.5" stroke-width="1.1"/>
<circle cx="1793.4" cy="52.6" r="4.6" stroke="#8A8A8A"/><path d="M1788.8 52.6 H1786 M1798 52.6 H1800.8" stroke="#8A8A8A"/>
<circle cx="1817" cy="52.6" r="4.6" stroke="#8A8A8A"/><path d="M1821.6 52.6 H1826.6 M1824.2 50.2 L1826.6 52.6 L1824.2 55" stroke="#8A8A8A"/>
<circle cx="1845.1" cy="52.9" r="6.7"/>
<path d="M1844.3 49.2 V56.6 M1844.3 49.2 L1847.7 52.9" stroke-width="1.1"/>
<path d="M1865.2 46.6 H1878 V59 H1865.2 Z M1871.6 46.6 V59"/>
</g>
<g fill="#CCCCCC"><circle cx="1844.3" cy="49.2" r="1.4"/><circle cx="1844.3" cy="56.6" r="1.4"/><circle cx="1847.7" cy="52.9" r="1.4"/>
<rect x="1890.6" y="52" width="2" height="2"/><rect x="1896" y="52" width="2" height="2"/><rect x="1901.2" y="52" width="2" height="2"/></g>
<g fill="none" stroke="#CCCCCC" stroke-width="1.05">
<rect x="1684.3" y="10.6" width="13.6" height="12.6" rx="1"/>
<rect x="1710.2" y="10.6" width="13.6" height="12.6" rx="1"/><path d="M1710.2 19.6 H1723.8"/>
<rect x="1736" y="10.6" width="13.6" height="12.6" rx="1"/><path d="M1742.8 10.6 V23.2"/>
<rect x="1762.8" y="10.6" width="4.4" height="12.6" rx="0.8"/><rect x="1770.6" y="10.8" width="5.4" height="4.6" rx="0.8"/><rect x="1770.6" y="18.4" width="5.4" height="4.6" rx="0.8"/>
<path d="M1800 17.5 H1810"/>
<rect x="1845.8" y="14" width="8" height="8"/><path d="M1848 14 V12 H1856 V20 H1853.8"/>
<path d="M1892 12 L1902 22 M1902 12 L1892 22"/>
<path d="M647.5 17.5 H635 M640.5 12 L635 17.5 L640.5 23"/>
</g>
<rect x="1684.8" y="11.1" width="5.4" height="11.6" fill="#CCCCCC"/>
<path d="M660.6 17.5 H673.2 M667.8 12 L673.2 17.5 L667.8 23" fill="none" stroke="#8A8A8A" stroke-width="1.05"/>
<rect x="688.5" y="5.5" width="600.5" height="23" rx="6" fill="#222222" stroke="#3A3A3A" stroke-width="1"/>
<circle cx="974.6" cy="15.6" r="4" fill="none" stroke="#CCCCCC" stroke-width="1.1"/><path d="M971.8 18.4 L968 22.2" stroke="#CCCCCC" stroke-width="1.2"/>
</svg>
<div class="t" style="left:987px;top:12px;font-size:12.6px;color:#CCCCCC">client</div>
<!-- STATUS -->
<div id="status" class="a"></div>
<svg style="left:0;top:0" width="1920" height="1078" viewBox="0 0 1920 1078">
<rect x="0" y="1057" width="34" height="21" fill="#1B7CD2"/>
<path d="M12.7 1064.8 L17.2 1068.4 L13 1072.6 M21.6 1061.4 L17.3 1065.4 L21.7 1069" fill="none" stroke="#FFFFFF" stroke-width="1.1"/>
<g fill="none" stroke="#CCCCCC" stroke-width="1">
<circle cx="43.6" cy="1062.2" r="1.8"/><circle cx="43.6" cy="1071.2" r="1.8"/><circle cx="50.2" cy="1064.3" r="1.8"/>
<path d="M43.6 1064 V1069.4 M50.2 1066.1 Q50.2 1069.2 44.8 1069.6"/>
<path d="M111.6 1070.6 H110.5 Q108.2 1070.6 108.2 1068 Q108.2 1065.6 110.6 1065.5 Q111.3 1062.2 114.6 1062.2 Q117.9 1062.2 118.5 1065.5 Q120.9 1065.6 120.9 1068 Q120.9 1070.6 118.5 1070.6 H117.4"/>
<path d="M114.5 1072 V1066 M112.4 1068 L114.5 1065.9 L116.6 1068"/>
<circle cx="138" cy="1063" r="1.6"/><circle cx="138" cy="1071" r="1.6"/><circle cx="145.6" cy="1066" r="1.6"/>
<path d="M138 1064.6 V1069.4 M141.2 1061.5 V1073 M145.6 1067.6 Q145.6 1070 141.4 1070.4"/>
<circle cx="172.5" cy="1067" r="5.7"/><path d="M170 1064.5 L175 1069.5 M175 1064.5 L170 1069.5"/>
<path d="M199.5 1061.6 L205.6 1071.6 H193.4 Z"/><path d="M199.5 1065.2 V1068.4" stroke-width="1.1"/>
<path d="M240 1067 L237 1072.4 M240 1067 L243 1072.4 M237.8 1070.8 H242.2"/>
<path d="M236.6 1063.6 Q235.4 1065.8 236.6 1068 M243.4 1063.6 Q244.6 1065.8 243.4 1068 M234.8 1062.2 Q232.6 1065.8 234.8 1069.4 M245.2 1062.2 Q247.4 1065.8 245.2 1069.4"/>
<path d="M346.8 1061.4 L342.6 1067.2 H346.2 L344.4 1072.8 L350.4 1065.8 H346.8 L349.4 1061.4"/>
<path d="M1251.8 1060.6 V1073.4"/>
<path d="M1603.8 1061.8 Q1602.2 1061.8 1602.2 1063.6 V1065.8 Q1602.2 1067.2 1601.2 1067.2 Q1602.2 1067.2 1602.2 1068.6 V1070.6 Q1602.2 1072.4 1603.8 1072.4 M1611.8 1061.8 Q1613.4 1061.8 1613.4 1063.6 V1065.8 Q1613.4 1067.2 1614.4 1067.2 Q1613.4 1067.2 1613.4 1068.6 V1070.6 Q1613.4 1072.4 1611.8 1072.4"/>
<path d="M1692.6 1069.6 A5.6 5.6 0 1 1 1697.4 1069.6 M1693.8 1067.6 A3.2 3.2 0 1 1 1696.2 1067.6"/>
<path d="M1762.2 1067.6 L1765.6 1071.4 L1773.2 1061.8"/>
<path d="M1818.8 1067.8 L1822 1071.4 L1829.6 1062 M1823.6 1069.8 L1825 1071.4 L1832.8 1062"/>
<path d="M1894.6 1071 V1066.4 Q1894.6 1061.8 1898 1061.8 Q1901.4 1061.8 1901.4 1066.4 V1071 M1893.4 1071 H1902.6 M1896.8 1072.6 Q1898 1074.2 1899.2 1072.6"/>
</g>
<g fill="#CCCCCC"><circle cx="1251.8" cy="1067" r="2.6" fill="none" stroke="#CCCCCC" stroke-width="1.3"/><circle cx="240" cy="1066.4" r="1.4"/><circle cx="1695" cy="1066.4" r="1.4"/><rect x="1694.1" y="1067" width="1.8" height="5.6"/></g>
</svg>
<div class="sb" style="left:57.5px;top:1062px;font-size:11.6px">master+</div>
<div class="sb" style="left:182.8px;top:1062px;font-size:11.6px">0</div>
<div class="sb" style="left:210px;top:1062px;font-size:11.6px">0</div>
<div class="sb" style="left:250px;top:1062px;font-size:11.6px">0</div>
<div class="sb" style="left:272.5px;top:1062px;font-size:11.6px">Git Graph</div>
<div class="sb" style="left:1262.5px;top:1062px;font-size:11.6px">You, 4 minutes ago</div>
<div class="sb" style="left:1379.3px;top:1062px;font-size:11.6px">Ln 18, Col 41</div>
<div class="sb" style="left:1463.5px;top:1062px;font-size:11.6px">Spaces: 2</div>
<div class="sb" style="left:1528px;top:1062px;font-size:11.6px">UTF-8</div>
<div class="sb" style="left:1575.5px;top:1062px;font-size:11.6px">LF</div>
<div class="sb" style="left:1621px;top:1062px;font-size:11.6px">JavaScript</div>
<div class="sb" style="left:1704.8px;top:1062px;font-size:11.6px">Go Live</div>
<div class="sb" style="left:1778px;top:1062px;font-size:11.6px">Spell</div>
<div class="sb" style="left:1837px;top:1062px;font-size:11.6px">Prettier</div>
<svg style="left:0;top:0" width="1920" height="1078" viewBox="0 0 1920 1078"><g opacity="0.55">
<rect x="1794.00" y="92.3" width="5.88" height="1.3" fill="#C586C0"/>
<rect x="1800.86" y="92.3" width="0.98" height="1.3" fill="#CCCCCC"/>
<rect x="1802.82" y="92.3" width="8.82" height="1.3" fill="#9CDCFE"/>
<rect x="1811.64" y="92.3" width="0.98" height="1.3" fill="#CCCCCC"/>
<rect x="1813.60" y="92.3" width="6.86" height="1.3" fill="#9CDCFE"/>
<rect x="1820.46" y="92.3" width="0.98" height="1.3" fill="#CCCCCC"/>
<rect x="1822.42" y="92.3" width="7.84" height="1.3" fill="#9CDCFE"/>
<rect x="1831.24" y="92.3" width="0.98" height="1.3" fill="#CCCCCC"/>
<rect x="1833.20" y="92.3" width="3.92" height="1.3" fill="#C586C0"/>
<rect x="1838.10" y="92.3" width="6.86" height="1.3" fill="#CE9178"/>
<rect x="1844.96" y="92.3" width="0.98" height="1.3" fill="#CCCCCC"/>
<rect x="1794.00" y="94.3" width="5.88" height="1.3" fill="#C586C0"/>
<rect x="1800.86" y="94.3" width="1.96" height="1.3" fill="#9CDCFE"/>
<rect x="1803.80" y="94.3" width="3.92" height="1.3" fill="#C586C0"/>
<rect x="1808.70" y="94.3" width="17.64" height="1.3" fill="#CE9178"/>
<rect x="1826.34" y="94.3" width="0.98" height="1.3" fill="#CCCCCC"/>
<rect x="1794.00" y="96.3" width="5.88" height="1.3" fill="#C586C0"/>
<rect x="1800.86" y="96.3" width="10.78" height="1.3" fill="#CE9178"/>
<rect x="1811.64" y="96.3" width="0.98" height="1.3" fill="#CCCCCC"/>
<rect x="1794.00" y="100.3" width="7.84" height="1.3" fill="#569CD6"/>
<rect x="1802.82" y="100.3" width="2.94" height="1.3" fill="#DCDCAA"/>
<rect x="1805.76" y="100.3" width="1.96" height="1.3" fill="#FFD700"/>
<rect x="1808.70" y="100.3" width="0.98" height="1.3" fill="#FFD700"/>
<rect x="1795.96" y="102.3" width="4.90" height="1.3" fill="#569CD6"/>
<rect x="1801.84" y="102.3" width="5.88" height="1.3" fill="#4FC1FF"/>
<rect x="1808.70" y="102.3" width="0.98" height="1.3" fill="#CCCCCC"/>
<rect x="1810.66" y="102.3" width="1.96" height="1.3" fill="#DCDCAA"/>
<rect x="1812.62" y="102.3" width="0.98" height="1.3" fill="#FFD700"/>
<rect x="1813.60" y="102.3" width="22.54" height="1.3" fill="#CE9178"/>
<rect x="1836.14" y="102.3" width="1.96" height="1.3" fill="#CCCCCC"/>
<rect x="1795.96" y="104.3" width="4.90" height="1.3" fill="#569CD6"/>
<rect x="1801.84" y="104.3" width="0.98" height="1.3" fill="#CCCCCC"/>
<rect x="1802.82" y="104.3" width="2.94" height="1.3" fill="#4FC1FF"/>
<rect x="1805.76" y="104.3" width="0.98" height="1.3" fill="#CCCCCC"/>
<rect x="1807.72" y="104.3" width="5.88" height="1.3" fill="#4FC1FF"/>
<rect x="1813.60" y="104.3" width="0.98" height="1.3" fill="#CCCCCC"/>
<rect x="1815.56" y="104.3" width="0.98" height="1.3" fill="#CCCCCC"/>
<rect x="1817.52" y="104.3" width="7.84" height="1.3" fill="#DCDCAA"/>
<rect x="1825.36" y="104.3" width="4.90" height="1.3" fill="#CCCCCC"/>
<rect x="1795.96" y="106.3" width="4.90" height="1.3" fill="#569CD6"/>
<rect x="1801.84" y="106.3" width="0.98" height="1.3" fill="#CCCCCC"/>
<rect x="1802.82" y="106.3" width="4.90" height="1.3" fill="#4FC1FF"/>
<rect x="1807.72" y="106.3" width="0.98" height="1.3" fill="#CCCCCC"/>
<rect x="1809.68" y="106.3" width="7.84" height="1.3" fill="#4FC1FF"/>
<rect x="1817.52" y="106.3" width="0.98" height="1.3" fill="#CCCCCC"/>
<rect x="1819.48" y="106.3" width="0.98" height="1.3" fill="#CCCCCC"/>
<rect x="1821.44" y="106.3" width="7.84" height="1.3" fill="#DCDCAA"/>
<rect x="1829.28" y="106.3" width="4.90" height="1.3" fill="#CE9178"/>
<rect x="1795.96" y="108.3" width="4.90" height="1.3" fill="#569CD6"/>
<rect x="1801.84" y="108.3" width="0.98" height="1.3" fill="#CCCCCC"/>
<rect x="1802.82" y="108.3" width="1.96" height="1.3" fill="#4FC1FF"/>
<rect x="1804.78" y="108.3" width="0.98" height="1.3" fill="#CCCCCC"/>
<rect x="1806.74" y="108.3" width="4.90" height="1.3" fill="#4FC1FF"/>
<rect x="1811.64" y="108.3" width="0.98" height="1.3" fill="#CCCCCC"/>
<rect x="1813.60" y="108.3" width="0.98" height="1.3" fill="#CCCCCC"/>
<rect x="1815.56" y="108.3" width="7.84" height="1.3" fill="#DCDCAA"/>
<rect x="1823.40" y="108.3" width="4.90" height="1.3" fill="#CE9178"/>
<rect x="1795.96" y="112.3" width="8.82" height="1.3" fill="#DCDCAA"/>
<rect x="1804.78" y="112.3" width="2.94" height="1.3" fill="#CCCCCC"/>
<rect x="1808.70" y="112.3" width="1.96" height="1.3" fill="#CCCCCC"/>
<rect x="1811.64" y="112.3" width="0.98" height="1.3" fill="#CCCCCC"/>
<rect x="1797.92" y="114.3" width="5.88" height="1.3" fill="#4FC1FF"/>
<rect x="1803.80" y="114.3" width="3.92" height="1.3" fill="#DCDCAA"/>
<rect x="1807.72" y="114.3" width="8.82" height="1.3" fill="#CE9178"/>
<rect x="1816.54" y="114.3" width="0.98" height="1.3" fill="#CCCCCC"/>
<rect x="1818.50" y="114.3" width="1.96" height="1.3" fill="#CCCCCC"/>
<rect x="1821.44" y="114.3" width="1.96" height="1.3" fill="#CCCCCC"/>
<rect x="1824.38" y="114.3" width="0.98" height="1.3" fill="#CCCCCC"/>
<rect x="1799.88" y="116.3" width="4.90" height="1.3" fill="#569CD6"/>
<rect x="1805.76" y="116.3" width="7.84" height="1.3" fill="#4FC1FF"/>
<rect x="1814.58" y="116.3" width="0.98" height="1.3" fill="#CCCCCC"/>
<rect x="1816.54" y="116.3" width="5.88" height="1.3" fill="#4FC1FF"/>
<rect x="1822.42" y="116.3" width="3.92" height="1.3" fill="#9CDCFE"/>
<rect x="1799.88" y="118.3" width="4.90" height="1.3" fill="#DCDCAA"/>
<rect x="1804.78" y="118.3" width="10.78" height="1.3" fill="#9CDCFE"/>
<rect x="1797.92" y="120.3" width="2.94" height="1.3" fill="#CCCCCC"/>
<rect x="1797.92" y="124.3" width="5.88" height="1.3" fill="#4FC1FF"/>
<rect x="1803.80" y="124.3" width="3.92" height="1.3" fill="#DCDCAA"/>
<rect x="1807.72" y="124.3" width="8.82" height="1.3" fill="#CE9178"/>
<rect x="1816.54" y="124.3" width="0.98" height="1.3" fill="#CCCCCC"/>
<rect x="1818.50" y="124.3" width="5.88" height="1.3" fill="#9CDCFE"/>
<rect x="1825.36" y="124.3" width="1.96" height="1.3" fill="#CCCCCC"/>
<rect x="1828.30" y="124.3" width="0.98" height="1.3" fill="#CCCCCC"/>
<rect x="1799.88" y="126.3" width="5.88" height="1.3" fill="#DCDCAA"/>
<rect x="1805.76" y="126.3" width="6.86" height="1.3" fill="#9CDCFE"/>
<rect x="1813.60" y="126.3" width="1.96" height="1.3" fill="#9CDCFE"/>
<rect x="1816.54" y="126.3" width="8.82" height="1.3" fill="#9CDCFE"/>
<rect x="1826.34" y="126.3" width="6.86" height="1.3" fill="#9CDCFE"/>
<rect x="1797.92" y="128.3" width="2.94" height="1.3" fill="#CCCCCC"/>
<rect x="1797.92" y="132.3" width="5.88" height="1.3" fill="#C586C0"/>
<rect x="1804.78" y="132.3" width="1.96" height="1.3" fill="#CCCCCC"/>
<rect x="1807.72" y="132.3" width="1.96" height="1.3" fill="#CCCCCC"/>
<rect x="1810.66" y="132.3" width="0.98" height="1.3" fill="#CCCCCC"/>
<rect x="1799.88" y="134.3" width="5.88" height="1.3" fill="#4FC1FF"/>
<rect x="1805.76" y="134.3" width="4.90" height="1.3" fill="#DCDCAA"/>
<rect x="1810.66" y="134.3" width="8.82" height="1.3" fill="#CE9178"/>
<rect x="1819.48" y="134.3" width="1.96" height="1.3" fill="#CCCCCC"/>
<rect x="1797.92" y="136.3" width="1.96" height="1.3" fill="#CCCCCC"/>
<rect x="1797.92" y="138.3" width="1.96" height="1.3" fill="#6A9955"/>
<rect x="1800.86" y="138.3" width="23.52" height="1.3" fill="#6A9955"/>
<rect x="1825.36" y="138.3" width="26.46" height="1.3" fill="#6A9955"/>
<rect x="1795.96" y="140.3" width="1.96" height="1.3" fill="#CCCCCC"/>
<rect x="1798.90" y="140.3" width="3.92" height="1.3" fill="#CCCCCC"/>
<rect x="1795.96" y="144.3" width="4.90" height="1.3" fill="#569CD6"/>
<rect x="1801.84" y="144.3" width="9.80" height="1.3" fill="#DCDCAA"/>
<rect x="1812.62" y="144.3" width="0.98" height="1.3" fill="#CCCCCC"/>
<rect x="1814.58" y="144.3" width="10.78" height="1.3" fill="#DCDCAA"/>
<rect x="1825.36" y="144.3" width="0.98" height="1.3" fill="#CCCCCC"/>
<rect x="1797.92" y="146.3" width="6.86" height="1.3" fill="#569CD6"/>
<rect x="1805.76" y="146.3" width="1.96" height="1.3" fill="#569CD6"/>
<rect x="1808.70" y="146.3" width="0.98" height="1.3" fill="#569CD6"/>
<rect x="1799.88" y="148.3" width="5.88" height="1.3" fill="#4FC1FF"/>
<rect x="1805.76" y="148.3" width="5.88" height="1.3" fill="#DCDCAA"/>
<rect x="1811.64" y="148.3" width="8.82" height="1.3" fill="#CE9178"/>
<rect x="1820.46" y="148.3" width="0.98" height="1.3" fill="#CCCCCC"/>
<rect x="1822.42" y="148.3" width="0.98" height="1.3" fill="#CCCCCC"/>
<rect x="1801.84" y="150.3" width="6.86" height="1.3" fill="#9CDCFE"/>
<rect x="1808.70" y="150.3" width="0.98" height="1.3" fill="#CCCCCC"/>
<rect x="1810.66" y="150.3" width="4.90" height="1.3" fill="#9CDCFE"/>
<rect x="1815.56" y="150.3" width="0.98" height="1.3" fill="#CCCCCC"/>
<rect x="1801.84" y="152.3" width="2.94" height="1.3" fill="#9CDCFE"/>
<rect x="1799.88" y="154.3" width="2.94" height="1.3" fill="#CCCCCC"/>
<rect x="1799.88" y="156.3" width="7.84" height="1.3" fill="#DCDCAA"/>
<rect x="1807.72" y="156.3" width="4.90" height="1.3" fill="#CE9178"/>
<rect x="1797.92" y="158.3" width="1.96" height="1.3" fill="#CCCCCC"/>
<rect x="1797.92" y="160.3" width="1.96" height="1.3" fill="#6A9955"/>
<rect x="1800.86" y="160.3" width="23.52" height="1.3" fill="#6A9955"/>
<rect x="1825.36" y="160.3" width="26.46" height="1.3" fill="#6A9955"/>
<rect x="1797.92" y="162.3" width="3.92" height="1.3" fill="#4FC1FF"/>
<rect x="1795.96" y="164.3" width="0.98" height="1.3" fill="#DA70D6"/>
<rect x="1796.94" y="164.3" width="0.98" height="1.3" fill="#CCCCCC"/>
<rect x="1795.96" y="168.3" width="5.88" height="1.3" fill="#C586C0"/>
<rect x="1802.82" y="168.3" width="0.98" height="1.3" fill="#DA70D6"/>
<rect x="1797.92" y="170.3" width="0.98" height="1.3" fill="#808080"/>
<rect x="1798.90" y="170.3" width="2.94" height="1.3" fill="#569CD6"/>
<rect x="1802.82" y="170.3" width="8.82" height="1.3" fill="#9CDCFE"/>
<rect x="1811.64" y="170.3" width="0.98" height="1.3" fill="#CCCCCC"/>
<rect x="1812.62" y="170.3" width="4.90" height="1.3" fill="#CE9178"/>
<rect x="1817.52" y="170.3" width="0.98" height="1.3" fill="#808080"/>
<rect x="1799.88" y="172.3" width="0.98" height="1.3" fill="#808080"/>
<rect x="1800.86" y="172.3" width="1.96" height="1.3" fill="#569CD6"/>
<rect x="1802.82" y="172.3" width="0.98" height="1.3" fill="#808080"/>
<rect x="1803.80" y="172.3" width="15.68" height="1.3" fill="#CCCCCC"/>
<rect x="1819.48" y="172.3" width="1.96" height="1.3" fill="#808080"/>
<rect x="1821.44" y="172.3" width="1.96" height="1.3" fill="#569CD6"/>
<rect x="1823.40" y="172.3" width="0.98" height="1.3" fill="#808080"/>
<rect x="1799.88" y="174.3" width="0.98" height="1.3" fill="#808080"/>
<rect x="1800.86" y="174.3" width="1.96" height="1.3" fill="#569CD6"/>
<rect x="1803.80" y="174.3" width="1.96" height="1.3" fill="#808080"/>
<rect x="1799.88" y="176.3" width="0.98" height="1.3" fill="#808080"/>
<rect x="1800.86" y="176.3" width="2.94" height="1.3" fill="#569CD6"/>
<rect x="1804.78" y="176.3" width="8.82" height="1.3" fill="#9CDCFE"/>
<rect x="1813.60" y="176.3" width="0.98" height="1.3" fill="#CCCCCC"/>
<rect x="1814.58" y="176.3" width="14.70" height="1.3" fill="#CE9178"/>
<rect x="1829.28" y="176.3" width="0.98" height="1.3" fill="#808080"/>
<rect x="1801.84" y="178.3" width="0.98" height="1.3" fill="#179FFF"/>
<rect x="1802.82" y="178.3" width="2.94" height="1.3" fill="#9CDCFE"/>
<rect x="1805.76" y="178.3" width="1.96" height="1.3" fill="#CCCCCC"/>
<rect x="1807.72" y="178.3" width="2.94" height="1.3" fill="#DCDCAA"/>
<rect x="1810.66" y="178.3" width="0.98" height="1.3" fill="#FFD700"/>
<rect x="1811.64" y="178.3" width="0.98" height="1.3" fill="#DA70D6"/>
<rect x="1812.62" y="178.3" width="4.90" height="1.3" fill="#9CDCFE"/>
<rect x="1817.52" y="178.3" width="0.98" height="1.3" fill="#CCCCCC"/>
<rect x="1819.48" y="178.3" width="4.90" height="1.3" fill="#9CDCFE"/>
<rect x="1824.38" y="178.3" width="0.98" height="1.3" fill="#DA70D6"/>
<rect x="1826.34" y="178.3" width="1.96" height="1.3" fill="#569CD6"/>
<rect x="1829.28" y="178.3" width="0.98" height="1.3" fill="#DA70D6"/>
<rect x="1803.80" y="180.3" width="5.88" height="1.3" fill="#C586C0"/>
<rect x="1810.66" y="180.3" width="0.98" height="1.3" fill="#179FFF"/>
<rect x="1805.76" y="182.3" width="0.98" height="1.3" fill="#808080"/>
<rect x="1806.74" y="182.3" width="2.94" height="1.3" fill="#569CD6"/>
<rect x="1807.72" y="184.3" width="8.82" height="1.3" fill="#9CDCFE"/>
<rect x="1816.54" y="184.3" width="0.98" height="1.3" fill="#CCCCCC"/>
<rect x="1817.52" y="184.3" width="0.98" height="1.3" fill="#FFD700"/>
<rect x="1818.50" y="184.3" width="3.92" height="1.3" fill="#CE9178"/>
<rect x="1823.40" y="184.3" width="1.96" height="1.3" fill="#DA70D6"/>
<rect x="1825.36" y="184.3" width="4.90" height="1.3" fill="#9CDCFE"/>
<rect x="1830.26" y="184.3" width="0.98" height="1.3" fill="#CCCCCC"/>
<rect x="1831.24" y="184.3" width="1.96" height="1.3" fill="#9CDCFE"/>
<rect x="1834.18" y="184.3" width="2.94" height="1.3" fill="#CCCCCC"/>
<rect x="1838.10" y="184.3" width="1.96" height="1.3" fill="#4FC1FF"/>
<rect x="1841.04" y="184.3" width="0.98" height="1.3" fill="#CCCCCC"/>
<rect x="1843.00" y="184.3" width="6.86" height="1.3" fill="#CE9178"/>
<rect x="1850.84" y="184.3" width="0.98" height="1.3" fill="#CCCCCC"/>
<rect x="1852.80" y="184.3" width="1.96" height="1.3" fill="#CE9178"/>
<rect x="1854.76" y="184.3" width="0.98" height="1.3" fill="#DA70D6"/>
<rect x="1855.74" y="184.3" width="0.98" height="1.3" fill="#CE9178"/>
<rect x="1856.72" y="184.3" width="0.98" height="1.3" fill="#FFD700"/>
<rect x="1807.72" y="186.3" width="2.94" height="1.3" fill="#9CDCFE"/>
<rect x="1810.66" y="186.3" width="0.98" height="1.3" fill="#CCCCCC"/>
<rect x="1811.64" y="186.3" width="0.98" height="1.3" fill="#FFD700"/>
<rect x="1812.62" y="186.3" width="4.90" height="1.3" fill="#9CDCFE"/>
<rect x="1817.52" y="186.3" width="0.98" height="1.3" fill="#FFD700"/>
<rect x="1805.76" y="188.3" width="0.98" height="1.3" fill="#808080"/>
<rect x="1807.72" y="190.3" width="0.98" height="1.3" fill="#FFD700"/>
<rect x="1808.70" y="190.3" width="4.90" height="1.3" fill="#9CDCFE"/>
<rect x="1813.60" y="190.3" width="0.98" height="1.3" fill="#CCCCCC"/>
<rect x="1814.58" y="190.3" width="6.86" height="1.3" fill="#9CDCFE"/>
<rect x="1821.44" y="190.3" width="0.98" height="1.3" fill="#FFD700"/>
<rect x="1805.76" y="192.3" width="1.96" height="1.3" fill="#808080"/>
<rect x="1807.72" y="192.3" width="2.94" height="1.3" fill="#569CD6"/>
<rect x="1810.66" y="192.3" width="0.98" height="1.3" fill="#808080"/>
<rect x="1803.80" y="194.3" width="0.98" height="1.3" fill="#179FFF"/>
<rect x="1804.78" y="194.3" width="0.98" height="1.3" fill="#CCCCCC"/>
<rect x="1801.84" y="196.3" width="0.98" height="1.3" fill="#DA70D6"/>
<rect x="1802.82" y="196.3" width="0.98" height="1.3" fill="#FFD700"/>
<rect x="1803.80" y="196.3" width="0.98" height="1.3" fill="#179FFF"/>
<rect x="1799.88" y="198.3" width="1.96" height="1.3" fill="#808080"/>
<rect x="1801.84" y="198.3" width="2.94" height="1.3" fill="#569CD6"/>
<rect x="1804.78" y="198.3" width="0.98" height="1.3" fill="#808080"/>
<rect x="1799.88" y="200.3" width="0.98" height="1.3" fill="#808080"/>
<rect x="1800.86" y="200.3" width="2.94" height="1.3" fill="#569CD6"/>
<rect x="1804.78" y="200.3" width="8.82" height="1.3" fill="#9CDCFE"/>
<rect x="1813.60" y="200.3" width="0.98" height="1.3" fill="#CCCCCC"/>
<rect x="1814.58" y="200.3" width="9.80" height="1.3" fill="#CE9178"/>
<rect x="1824.38" y="200.3" width="0.98" height="1.3" fill="#808080"/>
<rect x="1801.84" y="202.3" width="0.98" height="1.3" fill="#808080"/>
<rect x="1802.82" y="202.3" width="4.90" height="1.3" fill="#569CD6"/>
<rect x="1803.80" y="204.3" width="3.92" height="1.3" fill="#9CDCFE"/>
<rect x="1807.72" y="204.3" width="0.98" height="1.3" fill="#CCCCCC"/>
<rect x="1808.70" y="204.3" width="5.88" height="1.3" fill="#CE9178"/>
<rect x="1803.80" y="206.3" width="7.84" height="1.3" fill="#9CDCFE"/>
<rect x="1811.64" y="206.3" width="0.98" height="1.3" fill="#CCCCCC"/>
<rect x="1812.62" y="206.3" width="0.98" height="1.3" fill="#179FFF"/>
<rect x="1813.60" y="206.3" width="0.98" height="1.3" fill="#FFD700"/>
<rect x="1814.58" y="206.3" width="0.98" height="1.3" fill="#9CDCFE"/>
<rect x="1815.56" y="206.3" width="0.98" height="1.3" fill="#FFD700"/>
<rect x="1817.52" y="206.3" width="1.96" height="1.3" fill="#569CD6"/>
<rect x="1820.46" y="206.3" width="7.84" height="1.3" fill="#DCDCAA"/>
<rect x="1828.30" y="206.3" width="0.98" height="1.3" fill="#FFD700"/>
<rect x="1829.28" y="206.3" width="0.98" height="1.3" fill="#9CDCFE"/>
<rect x="1830.26" y="206.3" width="0.98" height="1.3" fill="#CCCCCC"/>
<rect x="1831.24" y="206.3" width="5.88" height="1.3" fill="#9CDCFE"/>
<rect x="1837.12" y="206.3" width="0.98" height="1.3" fill="#CCCCCC"/>
<rect x="1838.10" y="206.3" width="4.90" height="1.3" fill="#9CDCFE"/>
<rect x="1843.00" y="206.3" width="0.98" height="1.3" fill="#FFD700"/>
<rect x="1843.98" y="206.3" width="0.98" height="1.3" fill="#179FFF"/>
<rect x="1803.80" y="208.3" width="4.90" height="1.3" fill="#9CDCFE"/>
<rect x="1808.70" y="208.3" width="0.98" height="1.3" fill="#CCCCCC"/>
<rect x="1809.68" y="208.3" width="0.98" height="1.3" fill="#179FFF"/>
<rect x="1810.66" y="208.3" width="4.90" height="1.3" fill="#9CDCFE"/>
<rect x="1815.56" y="208.3" width="0.98" height="1.3" fill="#179FFF"/>
<rect x="1803.80" y="210.3" width="3.92" height="1.3" fill="#9CDCFE"/>
<rect x="1807.72" y="210.3" width="0.98" height="1.3" fill="#CCCCCC"/>
<rect x="1808.70" y="210.3" width="4.90" height="1.3" fill="#CE9178"/>
<rect x="1803.80" y="212.3" width="1.96" height="1.3" fill="#9CDCFE"/>
<rect x="1805.76" y="212.3" width="0.98" height="1.3" fill="#CCCCCC"/>
<rect x="1806.74" y="212.3" width="4.90" height="1.3" fill="#CE9178"/>
<rect x="1803.80" y="214.3" width="10.78" height="1.3" fill="#9CDCFE"/>
<rect x="1814.58" y="214.3" width="0.98" height="1.3" fill="#CCCCCC"/>
<rect x="1815.56" y="214.3" width="5.88" height="1.3" fill="#CE9178"/>
<rect x="1822.42" y="214.3" width="3.92" height="1.3" fill="#CE9178"/>
<rect x="1827.32" y="214.3" width="7.84" height="1.3" fill="#CE9178"/>
<rect x="1801.84" y="216.3" width="1.96" height="1.3" fill="#808080"/>
<rect x="1801.84" y="218.3" width="0.98" height="1.3" fill="#808080"/>
<rect x="1802.82" y="218.3" width="5.88" height="1.3" fill="#569CD6"/>
<rect x="1803.80" y="220.3" width="3.92" height="1.3" fill="#9CDCFE"/>
<rect x="1807.72" y="220.3" width="0.98" height="1.3" fill="#CCCCCC"/>
<rect x="1808.70" y="220.3" width="7.84" height="1.3" fill="#CE9178"/>
<rect x="1803.80" y="222.3" width="7.84" height="1.3" fill="#9CDCFE"/>
<rect x="1811.64" y="222.3" width="0.98" height="1.3" fill="#CCCCCC"/>
<rect x="1812.62" y="222.3" width="0.98" height="1.3" fill="#179FFF"/>
<rect x="1813.60" y="222.3" width="0.98" height="1.3" fill="#CCCCCC"/>
<rect x="1814.58" y="222.3" width="4.90" height="1.3" fill="#9CDCFE"/>
<rect x="1819.48" y="222.3" width="0.98" height="1.3" fill="#179FFF"/>
<rect x="1803.80" y="224.3" width="6.86" height="1.3" fill="#9CDCFE"/>
<rect x="1810.66" y="224.3" width="0.98" height="1.3" fill="#CCCCCC"/>
<rect x="1811.64" y="224.3" width="0.98" height="1.3" fill="#179FFF"/>
<rect x="1812.62" y="224.3" width="1.96" height="1.3" fill="#FFD700"/>
<rect x="1815.56" y="224.3" width="1.96" height="1.3" fill="#569CD6"/>
<rect x="1818.50" y="224.3" width="9.80" height="1.3" fill="#DCDCAA"/>
<rect x="1828.30" y="224.3" width="0.98" height="1.3" fill="#FFD700"/>
<rect x="1829.28" y="224.3" width="4.90" height="1.3" fill="#9CDCFE"/>
<rect x="1834.18" y="224.3" width="0.98" height="1.3" fill="#FFD700"/>
<rect x="1835.16" y="224.3" width="0.98" height="1.3" fill="#179FFF"/>
<rect x="1801.84" y="226.3" width="0.98" height="1.3" fill="#808080"/>
<rect x="1803.80" y="228.3" width="3.92" height="1.3" fill="#CCCCCC"/>
<rect x="1801.84" y="230.3" width="1.96" height="1.3" fill="#808080"/>
<rect x="1803.80" y="230.3" width="5.88" height="1.3" fill="#569CD6"/>
<rect x="1809.68" y="230.3" width="0.98" height="1.3" fill="#808080"/>
<rect x="1799.88" y="232.3" width="1.96" height="1.3" fill="#808080"/>
<rect x="1801.84" y="232.3" width="2.94" height="1.3" fill="#569CD6"/>
<rect x="1804.78" y="232.3" width="0.98" height="1.3" fill="#808080"/>
<rect x="1797.92" y="234.3" width="1.96" height="1.3" fill="#808080"/>
<rect x="1799.88" y="234.3" width="2.94" height="1.3" fill="#569CD6"/>
<rect x="1802.82" y="234.3" width="0.98" height="1.3" fill="#808080"/>
<rect x="1795.96" y="236.3" width="0.98" height="1.3" fill="#DA70D6"/>
<rect x="1796.94" y="236.3" width="0.98" height="1.3" fill="#CCCCCC"/>
<rect x="1794.00" y="238.3" width="0.98" height="1.3" fill="#FFD700"/>
<rect x="1794.00" y="242.3" width="5.88" height="1.3" fill="#C586C0"/>
<rect x="1800.86" y="242.3" width="6.86" height="1.3" fill="#C586C0"/>
<rect x="1808.70" y="242.3" width="2.94" height="1.3" fill="#DCDCAA"/>
<rect x="1811.64" y="242.3" width="0.98" height="1.3" fill="#CCCCCC"/>
</g></svg>
</body></html>
